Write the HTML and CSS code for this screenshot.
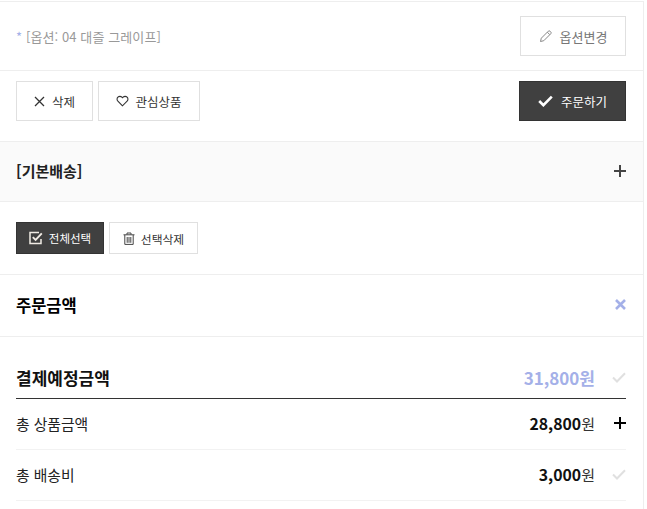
FILE: index.html
```html
<!DOCTYPE html>
<html lang="ko">
<head>
    <meta charset="UTF-8">
    <meta name="viewport" content="width=device-width, initial-scale=1.0">
    <title>장바구니</title>
    <link rel="stylesheet" href="styles.css">
</head>
<body>
    <div class="container">
        <div class="option-row">
            <p class="option-text"><span class="star">*</span> [옵션: 04 대즐 그레이프]</p>
            <a class="btn btn-option">
                <svg width="14" height="14" viewBox="0 0 14 14" fill="none" stroke="#888" stroke-width="1"><path d="M1.5 12.5l.8-3.3 7-7a1.2 1.2 0 0 1 1.7 0l.8.8a1.2 1.2 0 0 1 0 1.7l-7 7z"/><path d="M8.3 3.2l2.5 2.5"/></svg>
                옵션변경
            </a>
        </div>
        <div class="action-row">
            <a class="btn btn-delete">
                <svg width="11" height="11" viewBox="0 0 11 11" fill="none" stroke="#333" stroke-width="1.3"><path d="M1 1l9 9M10 1l-9 9"/></svg>
                삭제
            </a>
            <a class="btn btn-wish">
                <svg width="13" height="12" viewBox="0 0 13 12" fill="none" stroke="#333" stroke-width="1.1"><path d="M6.5 10.8L1.9 6.2a2.8 2.8 0 0 1 0-4 2.8 2.8 0 0 1 4 0l.6.6.6-.6a2.8 2.8 0 0 1 4 0 2.8 2.8 0 0 1 0 4z"/></svg>
                관심상품
            </a>
            <a class="btn btn-order">
                <svg width="15" height="12" viewBox="0 0 15 12" fill="none" stroke="#fff" stroke-width="2.6"><path d="M1.2 6l4.2 4.2L13.8 1.6"/></svg>
                주문하기
            </a>
        </div>
        <div class="ship-row">
            <strong>[기본배송]</strong>
            <svg width="12" height="12" viewBox="0 0 12 12" stroke="#444" stroke-width="2"><path d="M0 6h12M6 0v12"/></svg>
        </div>
        <div class="select-row">
            <a class="btn btn-all">
                <svg width="14" height="14" viewBox="0 0 14 14" fill="none" stroke="#f0ebe4" stroke-width="1.5"><path d="M12 8v4.6H1V1.4H10"/><path d="M3.8 6.2l2.8 2.8 6.2-6.6" stroke-width="1.9"/></svg>
                전체선택
            </a>
            <a class="btn btn-remove">
                <svg width="12" height="13" viewBox="0 0 12 13" fill="none" stroke="#444" stroke-width="1"><path d="M.5 2.8h11M4 2.6V1h4v1.6M1.8 3v9.4h8.4V3M4.2 5v5.8M6 5v5.8M7.8 5v5.8"/></svg>
                선택삭제
            </a>
        </div>
        <div class="sum-head">
            <h2>주문금액</h2>
            <svg width="11" height="11" viewBox="0 0 11 11" stroke="#a4b0e8" stroke-width="2.6"><path d="M1 1l9 9M10 1l-9 9"/></svg>
        </div>
        <div class="sum-body">
            <div class="sum-row sum-total">
                <span class="label">결제예정금액</span>
                <span class="price">31,800<small>원</small></span>
                <svg class="mark" width="14" height="11" viewBox="0 0 14 11" fill="none" stroke="#e0e0e0" stroke-width="2"><path d="M1 5.5l4 4L13 1.2"/></svg>
            </div>
            <div class="sum-row">
                <span class="label">총 상품금액</span>
                <span class="price">28,800<small>원</small></span>
                <svg class="mark mark-plus" width="12" height="12" viewBox="0 0 12 12" stroke="#000" stroke-width="2"><path d="M0 6h12M6 0v12"/></svg>
            </div>
            <div class="sum-row">
                <span class="label">총 배송비</span>
                <span class="price">3,000<small>원</small></span>
                <svg class="mark" width="14" height="11" viewBox="0 0 14 11" fill="none" stroke="#e0e0e0" stroke-width="2"><path d="M1 5.5l4 4L13 1.2"/></svg>
            </div>
        </div>
    </div>
</body>
</html>
```

FILE: styles.css
```css
body {
    margin: 0;
    background: #fff;
    font-family: "Noto Sans CJK KR", "Noto Sans", sans-serif;
    color: #333;
    overflow: hidden;
}
.container {
    width: 644px;
    height: 508px;
    margin-top: 1px;
    box-sizing: border-box;
    border-right: 1px solid #eee;
    border-top: 1px solid #eee;
}
.btn {
    display: flex;
    align-items: center;
    justify-content: center;
    box-sizing: border-box;
    border: 1px solid #e0e0e0;
    background: #fff;
    font-size: 12.5px;
}
.option-row {
    display: flex;
    justify-content: space-between;
    align-items: center;
    height: 68px;
    padding: 0 17px 0 16px;
    border-bottom: 1px solid #eee;
}
.option-text {
    margin: 0;
    font-size: 13px;
    letter-spacing: 0.1px;
    color: #999;
}
.star {
    color: #a4b0e8;
}
.btn-option {
    width: 106px;
    height: 40px;
    gap: 7px;
    font-size: 13px;
    color: #777;
}
.action-row {
    display: flex;
    gap: 5px;
    padding: 10px 17px 20px 16px;
    border-bottom: 1px solid #eee;
}
.btn-delete {
    width: 77px;
    height: 40px;
    gap: 7px;
}
.btn-wish {
    width: 102px;
    height: 40px;
    gap: 6px;
}
.btn-order {
    width: 107px;
    height: 40px;
    gap: 8px;
    margin-left: auto;
    background: #404040;
    border-color: #333;
    color: #fff;
}
.ship-row {
    display: flex;
    justify-content: space-between;
    align-items: center;
    box-sizing: border-box;
    height: 60px;
    padding: 0 17px 2px 16px;
    background: #fafafa;
    border-bottom: 1px solid #eee;
    font-size: 15px;
    color: #222;
}
.select-row {
    display: flex;
    gap: 5px;
    padding: 20px 17px 20px 16px;
    border-bottom: 1px solid #eee;
}
.btn-all {
    width: 88px;
    height: 32px;
    gap: 6px;
    background: #404040;
    border-color: #333;
    color: #fff;
    font-size: 11.5px;
}
.btn-remove {
    width: 89px;
    height: 32px;
    gap: 6px;
    font-size: 11.8px;
}
.sum-head {
    display: flex;
    justify-content: space-between;
    align-items: center;
    box-sizing: border-box;
    height: 62px;
    padding: 0 17px 2px 16px;
    border-bottom: 1px solid #eee;
}
.sum-head h2 {
    margin: 0;
    font-size: 16.5px;
    color: #000;
}
.sum-body {
    padding: 11px 17px 0 16px;
}
.sum-row {
    display: flex;
    align-items: center;
    box-sizing: border-box;
    height: 51px;
    padding-bottom: 2px;
    border-bottom: 1px solid #f2f2f2;
    font-size: 14.8px;
    color: #222;
}
.sum-total {
    padding: 8px 0 0;
    border-bottom-color: #333;
}
.label {
    flex: 1;
}
.sum-total .label {
    font-size: 17px;
    font-weight: 700;
    color: #111;
}
.price {
    font-weight: 700;
    font-size: 15.8px;
    color: #111;
}
.price small {
    font-weight: 400;
    font-size: 15px;
    color: #333;
}
.sum-total .price {
    font-size: 17px;
    color: #a4b0e8;
}
.sum-total .price small {
    font-size: 17px;
    font-weight: 700;
    color: #a4b0e8;
}
.mark {
    margin-left: 17px;
}
.mark-plus {
    margin-left: 19px;
}
```
